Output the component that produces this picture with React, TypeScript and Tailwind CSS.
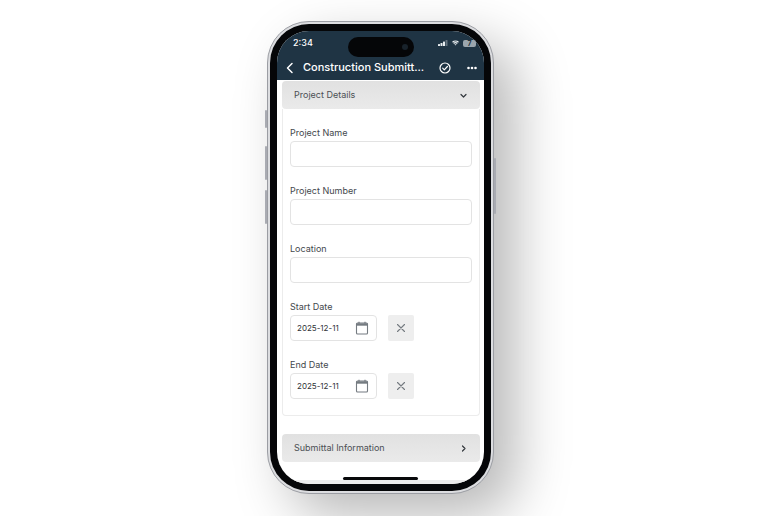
import { useState } from "react";

const TEXT_FIELDS = [
    { name: "projectName", label: "Project Name" },
    { name: "projectNumber", label: "Project Number" },
    { name: "location", label: "Location" },
];

const DATE_FIELDS = [
    { name: "startDate", label: "Start Date" },
    { name: "endDate", label: "End Date" },
];

function StatusBar() {
    return (
        <div className="relative flex h-6 items-center justify-between pl-4 pr-2">
            <span className="text-[9px] font-medium">2:34</span>
            <div className="absolute left-1/2 top-1.5 flex h-5 w-[66px] -translate-x-1/2 items-center justify-end rounded-full bg-[#050608] pr-1.5">
                <span className="size-1.5 rounded-full bg-[#18222b]" />
            </div>
            <div className="flex items-center gap-1">
                <svg width="10" height="6" viewBox="0 0 10 6" fill="#e8edf0">
                    <rect x="0" y="4" width="2" height="2" rx=".5" />
                    <rect x="2.5" y="3" width="2" height="3" rx=".5" />
                    <rect x="5" y="1.5" width="2" height="4.5" rx=".5" />
                    <rect x="7.5" y="0" width="2" height="6" rx=".5" opacity=".35" />
                </svg>
                <svg width="7" height="6" viewBox="0 0 8 6" fill="none" stroke="#e8edf0" strokeWidth="1.4">
                    <path d="M.6 2.1C2.5.3 5.5.3 7.4 2.1" />
                    <path d="M1.9 3.6C3.1 2.5 4.9 2.5 6.1 3.6" />
                    <path d="M2.8 4.5h2.4L4 5.9z" fill="#e8edf0" stroke="none" />
                </svg>
                <span className="flex h-[7px] w-[13px] items-center justify-center rounded-xs bg-[#9aa5ad] text-[7px] font-bold leading-none text-[#26343f]">7</span>
            </div>
        </div>
    );
}

function TitleBar() {
    return (
        <div className="flex h-[25px] items-center pl-2 pr-[7px]">
            <button type="button" aria-label="Back" className="w-[18px]">
                <svg width="9" height="12" viewBox="0 0 9 12" fill="none" stroke="white" strokeWidth="1.5" strokeLinecap="round" strokeLinejoin="round">
                    <path d="M7 1.5 2.5 6 7 10.5" />
                </svg>
            </button>
            <h1 className="flex-1 whitespace-nowrap text-[11px] font-medium">Construction Submitt...</h1>
            <button type="button" aria-label="Submit" className="mr-4">
                <svg width="12" height="12" viewBox="0 0 12 12" fill="none" stroke="white" strokeWidth="1.2" strokeLinecap="round" strokeLinejoin="round">
                    <circle cx="6" cy="6" r="5" />
                    <path d="M3.7 6.2 5.3 7.8 8.4 4.5" />
                </svg>
            </button>
            <button type="button" aria-label="More">
                <svg width="10" height="4" viewBox="0 0 10 4" fill="white">
                    <circle cx="1.5" cy="2" r="1.3" />
                    <circle cx="5" cy="2" r="1.3" />
                    <circle cx="8.5" cy="2" r="1.3" />
                </svg>
            </button>
        </div>
    );
}

function SectionHeader({ title, open, onClick }: { title: string, open: boolean, onClick: () => void }) {
    return (
        <button
            type="button"
            aria-expanded={open}
            onClick={onClick}
            className="flex h-7 w-full items-center justify-between rounded-sm bg-linear-to-b from-[#e1e1e1] to-[#eaeaea] px-3 text-[9px] text-[#4b4f54]"
        >
            <span>{title}</span>
            <svg width="9" height="9" viewBox="0 0 9 9" fill="none" stroke="#33383d" strokeWidth="1.2" strokeLinecap="round" strokeLinejoin="round">
                <path d={open ? "M2 3.5 4.5 6 7 3.5" : "M3.5 2 6 4.5 3.5 7"} />
            </svg>
        </button>
    );
}

function DateField({ name, label }: { name: string, label: string }) {
    const [value, setValue] = useState("2025-12-11");

    return (
        <div>
            <label htmlFor={name} className="block h-4 leading-4">{label}</label>
            <div className="flex gap-[11px]">
                <div className="flex h-[26px] w-[87px] items-center rounded-sm border border-[#e3e3e3] pl-1.5 pr-[7px]">
                    <input
                        id={name}
                        name={name}
                        value={value}
                        onChange={(e) => setValue(e.target.value)}
                        className="w-full min-w-0 flex-1 text-[8px] text-[#2f3337] outline-none"
                    />
                    <button type="button" aria-label={`Pick ${label}`}>
                        <svg width="14" height="14" viewBox="0 0 14 14" fill="none" stroke="#757b81">
                            <rect x="1.5" y="2" width="11" height="11" rx="1" strokeWidth="1.1" />
                            <path d="M1.5 3.5h11" strokeWidth="2.4" />
                            <path d="M4 .7v2M10 .7v2" strokeWidth="1.2" />
                        </svg>
                    </button>
                </div>
                <button
                    type="button"
                    aria-label={`Clear ${label}`}
                    onClick={() => setValue("")}
                    className="flex size-[26px] items-center justify-center rounded-xs bg-[#eeeeee]"
                >
                    <svg width="10" height="10" viewBox="0 0 10 10" stroke="#757b81" strokeWidth="1.1" strokeLinecap="round">
                        <path d="M1.5 1.5l7 7M8.5 1.5l-7 7" />
                    </svg>
                </button>
            </div>
        </div>
    );
}

function SideButton({ className }: { className: string }) {
    return <span className={`absolute w-0.5 rounded-xs bg-[#a9abb2] ${className}`} />;
}

export default function App() {
    const [detailsOpen, setDetailsOpen] = useState(true);
    const [infoOpen, setInfoOpen] = useState(false);

    return (
        <main className="flex min-h-screen justify-center overflow-hidden bg-white pr-[7px] pt-[21px] font-['Inter',sans-serif]">
            <div className="relative w-[227px] self-start rounded-[42px] border border-[#9b9da3] bg-[#dcdde0] p-0.5 shadow-[22px_22px_54px_rgba(0,0,0,0.28)]">
                <SideButton className="-left-[3px] top-[88px] h-[18px]" />
                <SideButton className="-left-[3px] top-[124px] h-[34px]" />
                <SideButton className="-left-[3px] top-[168px] h-[34px]" />
                <SideButton className="-right-[3px] top-[136px] h-[56px]" />

                <div className="rounded-[39px] bg-[#050608] p-[7px]">
                    <div className="overflow-hidden rounded-[32px] bg-white">
                        <header className="bg-[#1f3444] text-white">
                            <StatusBar />
                            <TitleBar />
                        </header>

                        <form className="pl-[5px] pr-1 pt-px text-[9px] text-[#43484d]">
                            <SectionHeader title="Project Details" open={detailsOpen} onClick={() => setDetailsOpen(!detailsOpen)} />
                            {detailsOpen && (
                                <div className="space-y-4 rounded-b-sm border border-t-0 border-[#ececec] px-[7px] pb-4 pt-4">
                                    {TEXT_FIELDS.map((field) => (
                                        <div key={field.name}>
                                            <label htmlFor={field.name} className="block h-4 leading-4">{field.label}</label>
                                            <input
                                                id={field.name}
                                                name={field.name}
                                                className="block h-[26px] w-full rounded-sm border border-[#e3e3e3] px-1.5 outline-none"
                                            />
                                        </div>
                                    ))}
                                    {DATE_FIELDS.map((field) => (
                                        <DateField key={field.name} name={field.name} label={field.label} />
                                    ))}
                                </div>
                            )}
                            <div className="mt-[18px]">
                                <SectionHeader title="Submittal Information" open={infoOpen} onClick={() => setInfoOpen(!infoOpen)} />
                            </div>
                        </form>

                        <div className="flex h-[22px] items-end justify-center border-b-4 border-[#ebebeb]">
                            <span className="h-[3px] w-[75px] rounded-full bg-[#08090b]" />
                        </div>
                    </div>
                </div>
            </div>
        </main>
    );
}
